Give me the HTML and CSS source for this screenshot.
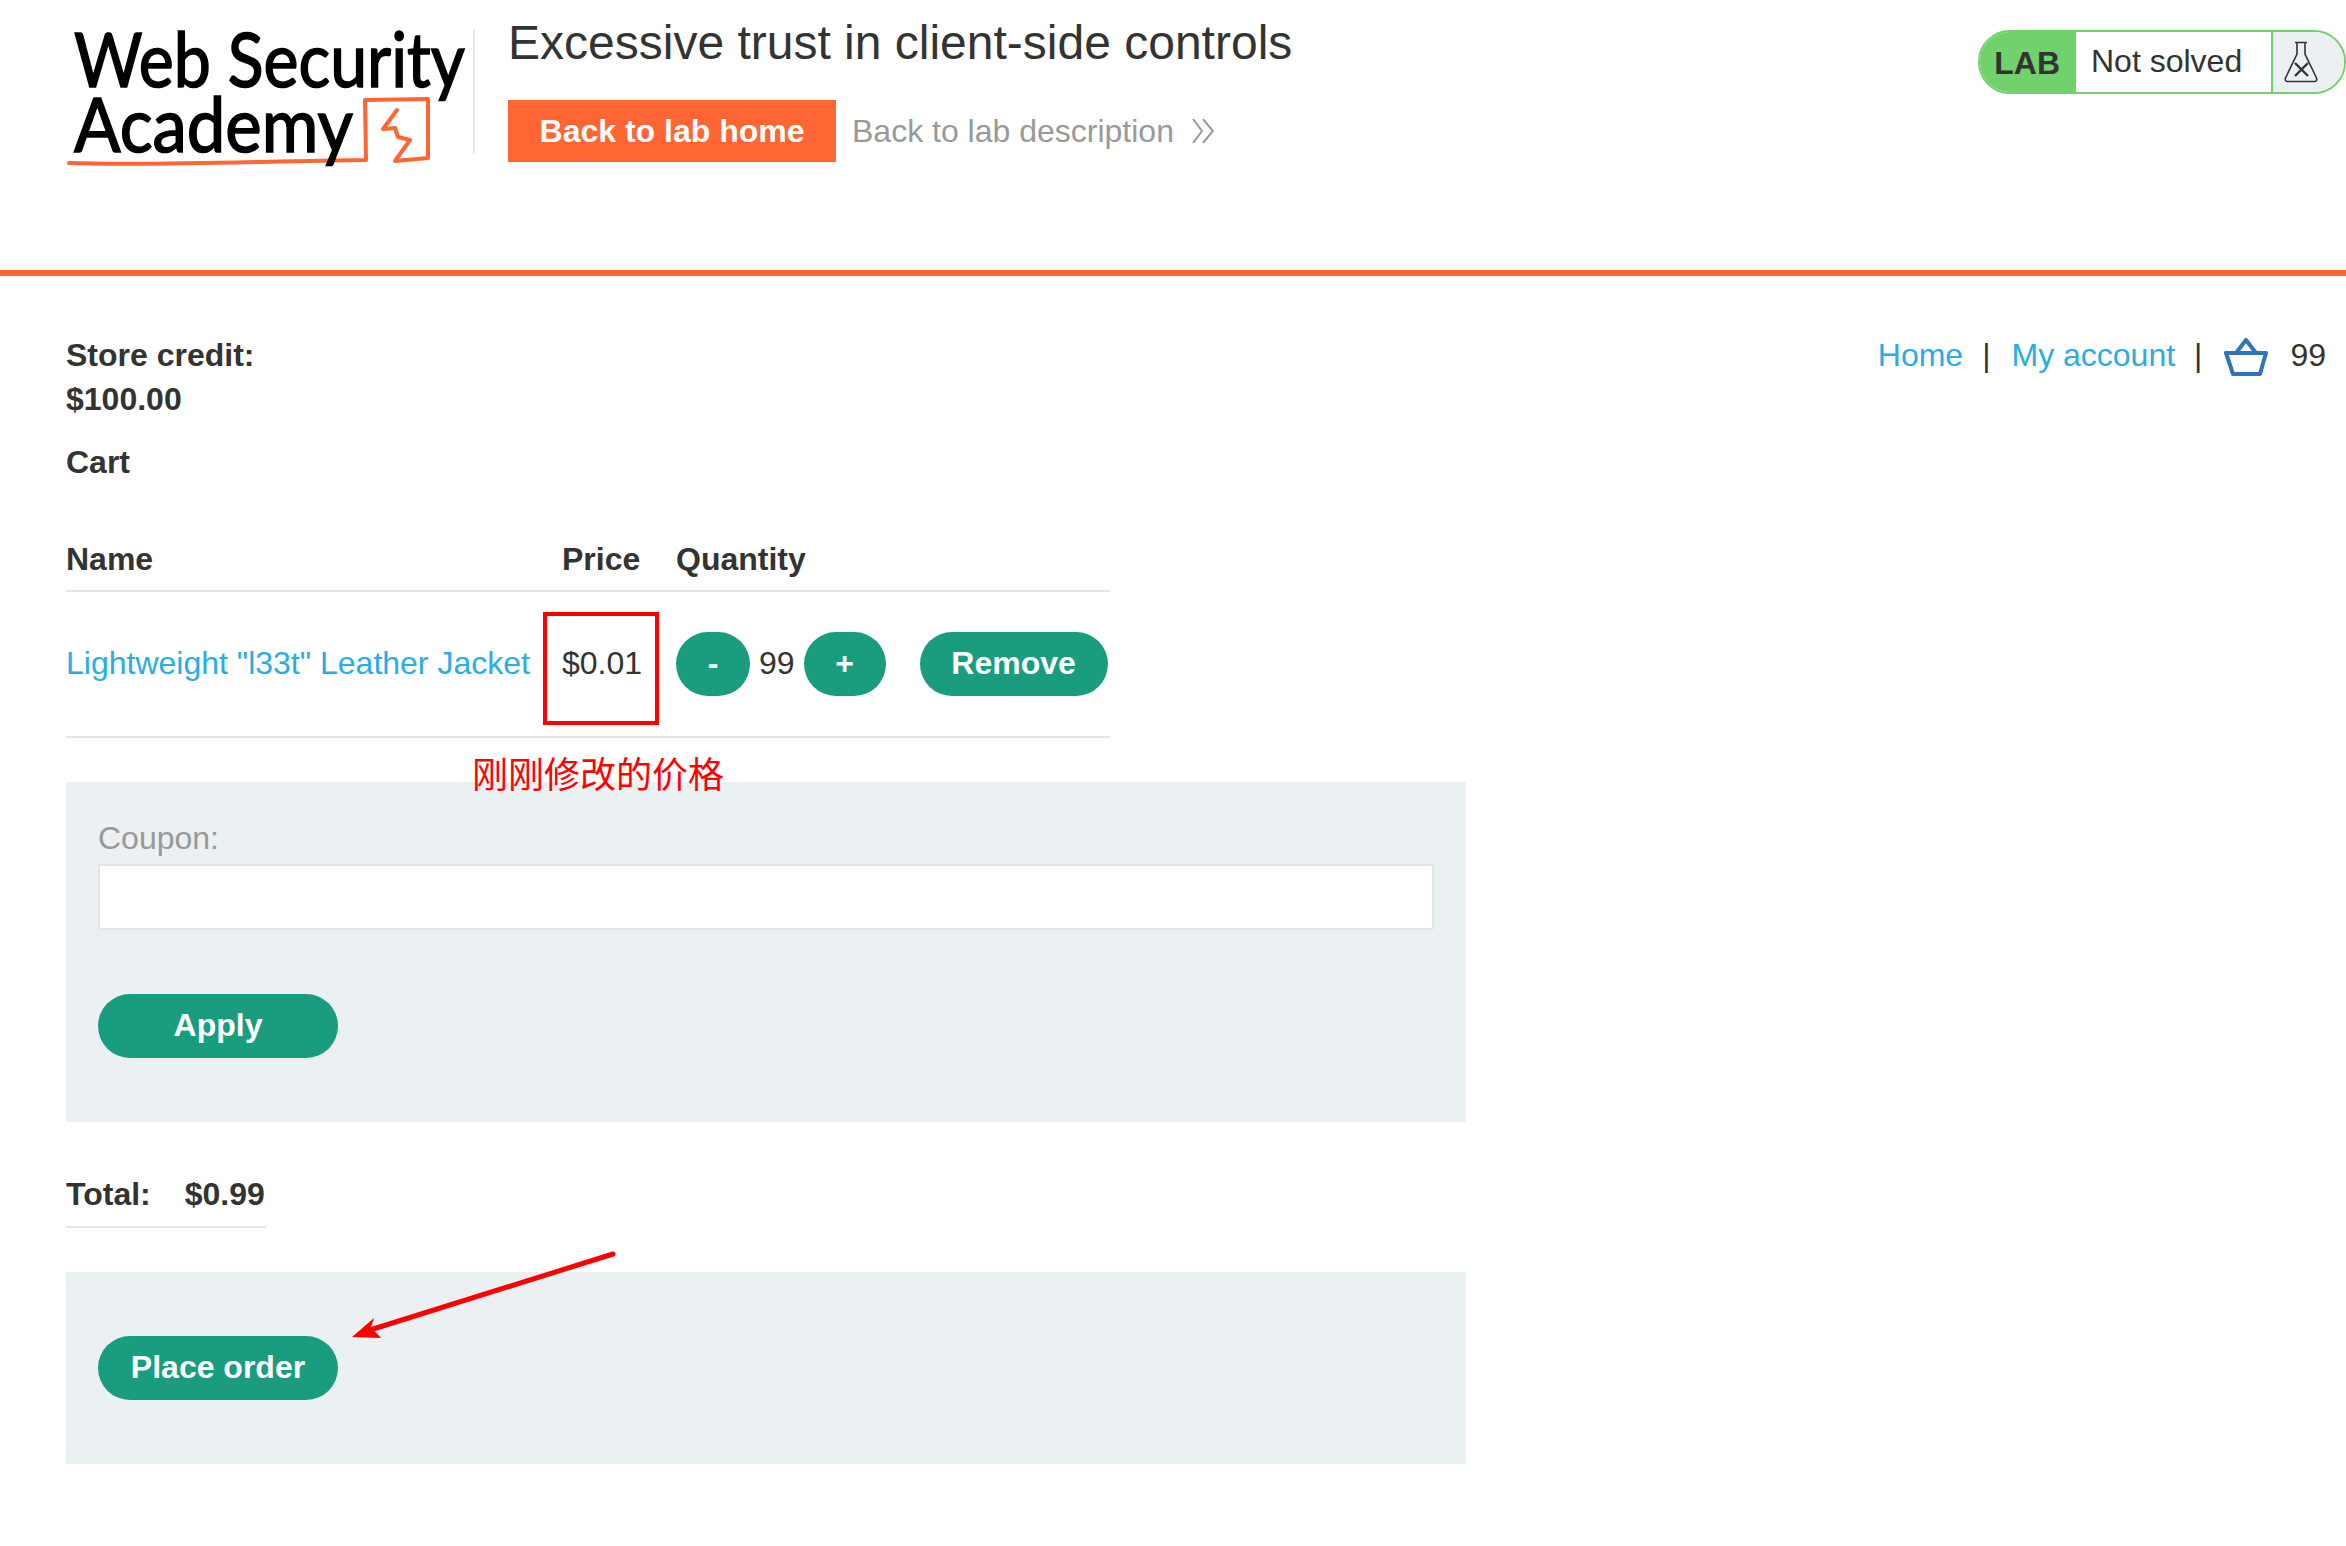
FILE: index.html
```html
<!DOCTYPE html>
<html lang="en">
    <head>
        <meta charset="UTF-8" />
        <meta name="viewport" content="width=device-width, initial-scale=1.0" />
        <title>Excessive trust in client-side controls</title>
        <link rel="stylesheet" href="styles.css">
    </head>
    <body>
        <header class="lab-header">
            <div class="logo">
                <svg width="408" height="170" viewBox="0 -28 408 170">
                    <path class="logo-mark" d="M4 135 C 90 138 200 133 301 132 L 300 72 L 363 71 L 363 130 L 330 133 L 345 112 L 333 109 L 330 100 L 318 101 L 332 82" />
                    <text class="logo-text" x="9" y="59" textLength="391" lengthAdjust="spacingAndGlyphs">Web Security</text>
                    <text class="logo-text" x="9" y="124" textLength="279" lengthAdjust="spacingAndGlyphs">Academy</text>
                </svg>
            </div>
            <div class="lab-title">
                <h2>Excessive trust in client-side controls</h2>
                <div class="lab-links">
                    <a class="btn-home" href="#">Back to lab home</a>
                    <a class="link-desc" href="#">Back to lab description</a>
                    <svg class="chevrons" width="22" height="24" viewBox="0 0 22 24">
                        <path d="M1 0 L10 12 L1 24 M11 0 L21 12 L11 24" />
                    </svg>
                </div>
            </div>
            <div class="lab-status">
                <span class="lab-tag">LAB</span>
                <span class="lab-state">Not solved</span>
                <span class="lab-flask">
                    <svg width="34" height="42" viewBox="0 0 34 42">
                        <path d="M11 1.5 H23 M13 1.5 V13 L1.5 37 Q0.5 40.5 4 40.5 H30 Q33.5 40.5 32.5 37 L21 13 V1.5" />
                        <path class="flask-x" d="M11 22 L24 35 M24 22 L11 35" />
                    </svg>
                </span>
            </div>
        </header>

        <main class="page">
            <div class="top-row">
                <div class="credit">
                    <p><strong>Store credit:</strong></p>
                    <p><strong>$100.00</strong></p>
                </div>
                <nav class="top-nav">
                    <a href="#">Home</a>
                    <span class="sep">|</span>
                    <a href="#">My account</a>
                    <span class="sep">|</span>
                    <svg class="basket" width="44" height="38" viewBox="0 0 44 38">
                        <path d="M2 15 H42 L36 36 H9 Z M12 15 L22 2 L32 15" />
                    </svg>
                    <span class="cart-count">99</span>
                </nav>
            </div>

            <p class="cart-title"><strong>Cart</strong></p>

            <table class="cart-table">
                <thead>
                    <tr>
                        <th class="col-name">Name</th>
                        <th class="col-price">Price</th>
                        <th class="col-qty">Quantity</th>
                    </tr>
                </thead>
                <tbody>
                    <tr>
                        <td class="cell-text"><a href="#">Lightweight "l33t" Leather Jacket</a></td>
                        <td class="cell-text">$0.01</td>
                        <td>
                            <div class="qty">
                                <button class="btn btn-minus">-</button>
                                <span class="qty-num">99</span>
                                <button class="btn btn-plus">+</button>
                                <button class="btn btn-remove">Remove</button>
                            </div>
                        </td>
                    </tr>
                </tbody>
            </table>

            <form class="panel coupon">
                <label for="coupon">Coupon:</label>
                <input type="text" id="coupon" />
                <button class="btn btn-wide" type="button">Apply</button>
            </form>

            <div class="total">
                <strong>Total:</strong>
                <strong>$0.99</strong>
            </div>

            <div class="panel order">
                <button class="btn btn-wide" type="button">Place order</button>
            </div>
        </main>

        <!-- annotations drawn on top of the screenshot -->
        <div class="note-box"></div>
        <div class="note-text">刚刚修改的价格</div>
        <svg class="note-arrow" width="270" height="90" viewBox="0 0 270 90">
            <path class="arrow-line" d="M263 4 L20 80" />
            <path class="arrow-head" d="M2 87 L24 68 L21 77 L31 88 Z" />
        </svg>
    </body>
</html>
```

FILE: styles.css
```css
* {
    padding: 0;
    margin: 0;
    box-sizing: border-box;
}
body {
    position: relative;
    background-color: #fff;
    color: #333332;
    font-family: "Liberation Sans", Arial, sans-serif;
    font-size: 32px;
    line-height: 44px;
}
a {
    color: #29ade3;
    text-decoration: none;
}

/* header */
.lab-header {
    display: flex;
    align-items: flex-start;
    height: 276px;
    border-bottom: 6px solid #ff6633;
}
.logo {
    width: 408px;
    margin-left: 65px;
    height: 170px;
    flex: none;
}
.logo svg {
    display: block;
}
.logo-text {
    font-family: Lato, sans-serif;
    font-size: 76px;
    font-weight: 400;
    fill: #000;
    stroke: #000;
    stroke-width: 1.6;
}
.logo-mark {
    fill: none;
    stroke: #ff6633;
    stroke-width: 4;
    stroke-linejoin: round;
    stroke-linecap: round;
}
.lab-title {
    border-left: 2px solid #e6e6e6;
    height: 123px;
    margin-top: 30px;
    padding-left: 33px;
    flex: 1;
}
.lab-title h2 {
    font-size: 48px;
    font-weight: 400;
    line-height: 56px;
    margin-top: -15px;
}
.lab-links {
    display: flex;
    align-items: center;
    margin-top: 29px;
}
.btn-home {
    display: block;
    width: 328px;
    height: 62px;
    background-color: #ff6633;
    color: #fff;
    font-weight: 700;
    line-height: 62px;
    text-align: center;
}
.link-desc {
    color: #999;
    margin-left: 16px;
}
.chevrons {
    margin-left: 18px;
}
.chevrons path {
    fill: none;
    stroke: #999;
    stroke-width: 2;
}
.lab-status {
    display: flex;
    flex: none;
    width: 368px;
    height: 64px;
    margin-top: 30px;
    border: 2px solid #70d16d;
    border-radius: 32px;
    overflow: hidden;
    line-height: 58px;
}
.lab-tag {
    width: 96px;
    background-color: #70d16d;
    font-weight: 700;
    text-align: right;
    padding: 2px 16px 0 0;
}
.lab-state {
    width: 197px;
    padding-left: 15px;
    border-right: 2px solid #70d16d;
}
.lab-flask {
    flex: 1;
    background-color: #ebf0f2;
    padding: 9px 0 0 11px;
}
.lab-flask svg {
    display: block;
}
.lab-flask path {
    fill: none;
    stroke: #333332;
    stroke-width: 1.6;
}
.lab-flask .flask-x {
    stroke-width: 2.4;
}

/* page */
.page {
    padding: 57px 20px 0 66px;
}
.top-row {
    display: flex;
    justify-content: space-between;
}
.top-nav {
    display: flex;
    align-items: center;
    height: 44px;
}
.sep {
    margin: 0 21px 0 19px;
}
.top-nav .basket {
    margin: 4px 0 0 1px;
}
.basket path {
    fill: none;
    stroke: #2f73b8;
    stroke-width: 4;
    stroke-linejoin: round;
}
.cart-count {
    margin-left: 22px;
}
.cart-title {
    margin-top: 19px;
}
.cart-table {
    border-collapse: collapse;
    table-layout: fixed;
    width: 1044px;
    margin-top: 53px;
}
.cart-table th {
    text-align: left;
    padding-bottom: 9px;
    border-bottom: 2px solid #e6e6e6;
}
.col-name {
    width: 496px;
}
.col-price {
    width: 114px;
}
.cart-table td {
    height: 146px;
    border-bottom: 2px solid #e6e6e6;
    vertical-align: middle;
}
.cart-table .cell-text {
    padding-bottom: 2px;
}
.qty {
    display: flex;
    align-items: center;
}
.qty-num {
    margin: 0 9px 0 9px;
    padding-bottom: 2px;
}
.btn {
    display: block;
    height: 64px;
    padding-bottom: 1px;
    border: none;
    border-radius: 32px;
    background-color: #1a9c7f;
    color: #fff;
    font-family: inherit;
    font-size: 32px;
    font-weight: 700;
}
.btn-minus {
    width: 74px;
}
.btn-plus {
    width: 82px;
}
.btn-remove {
    width: 188px;
    margin-left: 34px;
}
.btn-wide {
    width: 240px;
}
.panel {
    width: 1400px;
    background-color: #ebf0f2;
    padding: 0 32px;
}
.coupon {
    height: 340px;
    margin-top: 44px;
    padding-top: 34px;
}
.coupon label {
    display: block;
    color: #999;
}
.coupon input {
    display: block;
    width: 1336px;
    height: 66px;
    margin: 4px 0 64px;
    border: 2px solid #e6e6e6;
    background-color: #fff;
}
.total {
    display: flex;
    gap: 34px;
    width: 200px;
    height: 56px;
    margin-top: 50px;
    border-bottom: 2px solid #e6e6e6;
}
.order {
    height: 192px;
    margin-top: 44px;
    padding-top: 64px;
}

/* annotations */
.note-box {
    position: absolute;
    left: 543px;
    top: 612px;
    width: 116px;
    height: 113px;
    border: 4px solid #f00;
}
.note-text {
    position: absolute;
    left: 472px;
    top: 746px;
    color: #f00;
    font-family: "Noto Sans CJK SC", sans-serif;
    font-size: 36px;
    line-height: 52px;
}
.note-arrow {
    position: absolute;
    left: 350px;
    top: 1250px;
}
.arrow-line {
    fill: none;
    stroke: #f00;
    stroke-width: 5;
    stroke-linecap: round;
}
.arrow-head {
    fill: #f00;
}
```
